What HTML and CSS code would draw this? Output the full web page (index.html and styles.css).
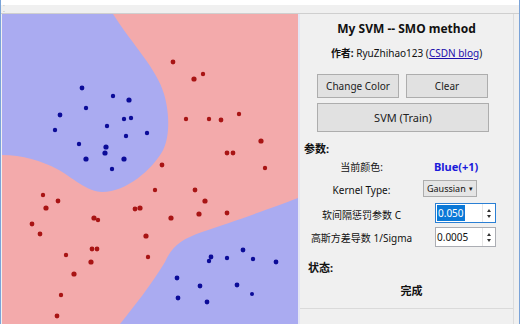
FILE: index.html
```html
<!DOCTYPE html>
<html lang="zh">
<head>
<meta charset="utf-8">
<title>My SVM -- SMO method</title>
<link rel="stylesheet" href="styles.css">
</head>
<body>
<div class="window">
  <div class="titlebar"></div>
  <div class="menubar"><span class="grip">⁚</span></div>
  <div class="main">
    <div class="canvas">
      <svg width="296" height="310" viewBox="0 0 296 310">
        <rect x="0" y="0" width="296" height="310" fill="#f3aaab"/>
        <path fill="#aaabf1" d="M0 0 H111 C130 30 155 55 162 80 C168 100 168 125 160 138 C150 155 125 178 100 178 C85 178 70 163 55 155 C40 147 20 141 0 141 Z"/>
        <path fill="#aaabf1" d="M296 184 C270 194 230 208 200 218 C180 225 170 232 163 248 C150 270 130 295 118 310 L296 310 Z"/>
        <g fill="#a81414">
          <circle cx="171" cy="48" r="2.4"/><circle cx="201" cy="60" r="2.2"/><circle cx="192" cy="65" r="2.6"/>
          <circle cx="184" cy="105" r="2.2"/><circle cx="207" cy="105" r="2.2"/><circle cx="219" cy="106" r="2.4"/>
          <circle cx="237" cy="100" r="2.2"/><circle cx="259" cy="127" r="2.6"/><circle cx="225" cy="139" r="2.4"/>
          <circle cx="231" cy="139" r="2.4"/><circle cx="160" cy="151" r="2.4"/><circle cx="263" cy="154" r="2.2"/>
          <circle cx="41" cy="181" r="2.2"/><circle cx="56" cy="187" r="2.4"/><circle cx="44" cy="194" r="2.6"/>
          <circle cx="153" cy="176" r="2.2"/><circle cx="193" cy="176" r="2.4"/><circle cx="203" cy="187" r="2.6"/>
          <circle cx="133" cy="195" r="2.4"/><circle cx="138" cy="194" r="2.6"/><circle cx="92" cy="204" r="2.6"/>
          <circle cx="96" cy="206" r="2.2"/><circle cx="169" cy="204" r="2.6"/><circle cx="197" cy="200" r="2.6"/>
          <circle cx="225" cy="199" r="2.4"/><circle cx="30" cy="210" r="2.4"/><circle cx="38" cy="220" r="2.4"/>
          <circle cx="144" cy="222" r="2.6"/><circle cx="90" cy="235" r="2.4"/><circle cx="95" cy="235" r="2.4"/>
          <circle cx="64" cy="241" r="2.2"/><circle cx="146" cy="243" r="2.2"/><circle cx="89" cy="248" r="2.6"/>
          <circle cx="72" cy="260" r="2.6"/><circle cx="59" cy="281" r="2.2"/><circle cx="55" cy="302" r="2.4"/>
        </g>
        <g fill="#0b0b98">
          <circle cx="80" cy="74" r="2.4"/><circle cx="111" cy="82" r="2.2"/><circle cx="127" cy="86" r="2.6"/>
          <circle cx="84" cy="94" r="2.2"/><circle cx="58" cy="101" r="2.4"/><circle cx="122" cy="105" r="2.2"/>
          <circle cx="129" cy="104" r="2.2"/><circle cx="105" cy="112" r="2.2"/><circle cx="53" cy="116" r="2.2"/>
          <circle cx="124" cy="122" r="2.2"/><circle cx="145" cy="119" r="2.2"/><circle cx="77" cy="130" r="2.2"/>
          <circle cx="104" cy="133" r="2.6"/><circle cx="103" cy="139" r="2.6"/><circle cx="84" cy="145" r="2.6"/>
          <circle cx="122" cy="145" r="2.6"/><circle cx="110" cy="155" r="2.2"/>
          <circle cx="241" cy="236" r="2.4"/><circle cx="209" cy="243" r="2.4"/><circle cx="225" cy="244" r="2.2"/>
          <circle cx="251" cy="245" r="2.2"/><circle cx="274" cy="248" r="2.4"/><circle cx="207" cy="247" r="2.2"/>
          <circle cx="175" cy="264" r="2.4"/><circle cx="198" cy="272" r="2.4"/><circle cx="235" cy="271" r="2.4"/>
          <circle cx="250" cy="280" r="2.0"/><circle cx="176" cy="284" r="2.4"/><circle cx="205" cy="288" r="2.4"/>
        </g>
      </svg>
    </div>
    <div class="sep"></div>
    <div class="panel">
      <div class="content">
        <div class="title">My SVM -- SMO method</div>
        <div class="author"><b>作者:</b> RyuZhihao123 (<a href="#">CSDN blog</a>)</div>
        <div class="btn-row">
          <button class="btn small">Change Color</button>
          <button class="btn small">Clear</button>
        </div>
        <button class="btn train">SVM (Train)</button>
        <div class="section">参数:</div>
        <div class="row r-color">
          <span class="label">当前颜色:</span>
          <span class="blue">Blue(+1)</span>
        </div>
        <div class="row r-kernel">
          <span class="label">Kernel Type:</span>
          <span class="combo"><span class="ctext">Gaussian</span><span class="caret">▾</span></span>
        </div>
        <div class="row r-c">
          <span class="label">软间隔惩罚参数 C</span>
          <span class="spin focus"><span class="val"><span class="sel">0.050</span></span><span class="arrows"><i class="up"></i><i class="down"></i></span></span>
        </div>
        <div class="row r-s">
          <span class="label">高斯方差导数 1/Sigma</span>
          <span class="spin"><span class="val">0.0005</span><span class="arrows"><i class="up"></i><i class="down"></i></span></span>
        </div>
        <div class="section status">状态:</div>
        <div class="done">完成</div>
      </div>
    </div>
    <div class="edge"></div>
  </div>
</div>
</body>
</html>
```
FILE: styles.css
```css
html, body {
  margin: 0;
  padding: 0;
}
body {
  width: 520px;
  height: 324px;
  overflow: hidden;
  background: #ffffff;
  font-family: "Noto Sans", "Noto Sans CJK SC", sans-serif;
  color: #111;
}
.window {
  display: flex;
  flex-direction: column;
  width: 520px;
  height: 324px;
  box-sizing: border-box;
  border-left: 1px solid #7aa3d8;
  border-right: 1px solid #7aa3d8;
}
.titlebar {
  height: 5px;
  background: #ffffff;
}
.menubar {
  height: 8px;
  background: #f0f0f0;
  border-bottom: 1px solid #cfcfcf;
  font-size: 8px;
  line-height: 8px;
  color: #bbb;
  padding-left: 2px;
}
.grip {
  display: block;
}
.main {
  flex: 1;
  display: flex;
  background: #f0f0f0;
}
.canvas {
  margin-left: 1px;
  width: 296px;
  height: 310px;
}
.canvas svg {
  display: block;
}
.sep {
  width: 2px;
  background: #e4e6f4;
}
.panel {
  width: 213px;
  display: flex;
  flex-direction: column;
  background: #f0f0f0;
}
.content {
  height: 295px;
  box-sizing: border-box;
  border-bottom: 1px solid #dadada;
  display: flex;
  flex-direction: column;
  padding-top: 7px;
}
.edge {
  width: 5px;
  border-left: 1px solid #dcdcdc;
  background: #f0f0f0;
}
.title {
  height: 16px;
  line-height: 16px;
  text-align: center;
  font-weight: bold;
  font-size: 12px;
}
.author {
  margin-top: 9px;
  height: 14px;
  line-height: 14px;
  text-align: center;
  font-size: 10px;
}
.author a {
  color: #1a0dab;
  text-decoration: underline;
}
.btn {
  font-family: inherit;
  background: #e1e1e1;
  border: 1px solid #adadad;
  color: #222;
  padding: 0;
  margin: 0;
  box-sizing: border-box;
}
.btn-row {
  margin-top: 14px;
  display: flex;
  gap: 7px;
  padding-left: 17px;
}
.btn.small {
  width: 82px;
  height: 24px;
  font-size: 10px;
}
.btn.train {
  margin-top: 5px;
  margin-left: 17px;
  width: 172px;
  height: 29px;
  font-size: 11px;
}
.section {
  margin-top: 10px;
  height: 14px;
  line-height: 14px;
  font-weight: bold;
  font-size: 11px;
  padding-left: 4px;
}
.section.status {
  margin-top: 14px;
  padding-left: 8px;
}
.row {
  display: flex;
  align-items: center;
  font-size: 10px;
}
.label {
  width: 123px;
  text-align: center;
}
.r-color {
  margin-top: 2px;
  height: 16px;
}
.blue {
  margin-left: 11px;
  color: #1a1adb;
  font-weight: bold;
  font-size: 11px;
}
.r-kernel {
  margin-top: 5px;
  height: 18px;
}
.r-kernel .label {
  padding-top: 4px;
}
.combo {
  width: 54px;
  height: 17px;
  box-sizing: border-box;
  border: 1px solid #adadad;
  background: #e5e5e5;
  display: flex;
  align-items: center;
  justify-content: space-between;
  padding: 0 3px 0 3px;
}
.ctext {
  font-size: 9px;
}
.caret {
  font-size: 7px;
  line-height: 7px;
}
.r-c {
  margin-top: 6px;
  height: 20px;
}
.r-c .label {
  padding-top: 3px;
}
.r-s {
  margin-top: 4px;
  height: 20px;
}
.spin {
  margin-left: 12px;
  width: 61px;
  height: 20px;
  box-sizing: border-box;
  border: 1px solid #abadb3;
  background: #ffffff;
  display: flex;
}
.spin.focus {
  border-color: #2a7fd4;
}
.val {
  flex: 1;
  display: flex;
  align-items: center;
  padding-left: 1px;
  font-size: 10px;
}
.sel {
  background: #0a78d7;
  color: #fff;
  padding: 2px 1px;
  line-height: 12px;
}
.arrows {
  width: 12px;
  display: flex;
  flex-direction: column;
  align-items: center;
  justify-content: center;
  gap: 3px;
  border-left: 1px solid #e6e6e6;
}
.arrows i {
  display: block;
  width: 0;
  height: 0;
  border-left: 2.5px solid transparent;
  border-right: 2.5px solid transparent;
}
.arrows .up {
  border-bottom: 3px solid #333;
}
.arrows .down {
  border-top: 3px solid #333;
}
.done {
  margin-top: 8px;
  height: 16px;
  line-height: 16px;
  text-align: center;
  padding-left: 10px;
  font-weight: bold;
  font-size: 11px;
}
```
